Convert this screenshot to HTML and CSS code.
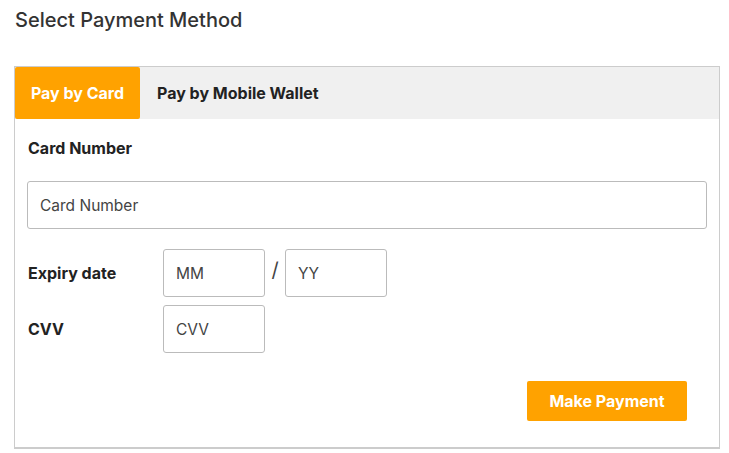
FILE: index.html
```html
<!DOCTYPE html>
<html>
<head>
<meta charset="utf-8">
<link rel="stylesheet" href="styles.css">
</head>
<body>
<h1 class="title">Select Payment Method</h1>
<div class="panel">
  <div class="tabs">
    <div class="tab active">Pay by Card</div>
    <div class="tab">Pay by Mobile Wallet</div>
  </div>
  <div class="content">
    <div class="label top-label">Card Number</div>
    <div class="input wide">Card Number</div>
    <div class="grid">
      <div class="label">Expiry date</div>
      <div class="pair">
        <div class="input small">MM</div>
        <span class="slash">/</span>
        <div class="input small">YY</div>
      </div>
      <div class="label">CVV</div>
      <div class="pair">
        <div class="input small">CVV</div>
      </div>
    </div>
    <div class="actions">
      <div class="btn">Make Payment</div>
    </div>
  </div>
</div>
</body>
</html>
```
FILE: styles.css
```css
* { box-sizing: border-box; }
body {
  margin: 0;
  background: #fff;
  font-family: Inter, Roboto, "Liberation Sans", sans-serif;
  color: #333;
}
.title {
  margin: 0;
  padding: 8px 0 0 15px;
  height: 66px;
  font-size: 20px;
  font-weight: 500;
  color: #333;
  line-height: 24px;
}
.panel {
  margin-left: 14px;
  width: 706px;
  height: 383px;
  border: 1px solid #ccc;
  border-bottom-width: 2px;
}
.tabs {
  display: flex;
  height: 52px;
  background: #f0f0f0;
}
.tab {
  display: flex;
  align-items: center;
  padding: 0 17px;
  font-size: 16px;
  font-weight: 700;
  color: #222;
}
.tab.active {
  width: 125px;
  justify-content: center;
  padding: 0;
  background: #ffa200;
  color: #fff;
  border-radius: 2px;
}
.content {
  padding: 0 12px 0 12px;
}
.label {
  font-size: 16px;
  font-weight: 700;
  color: #222;
}
.top-label {
  height: 58px;
  display: flex;
  align-items: center;
  padding-left: 1px;
  margin-bottom: 4px;
}
.input {
  height: 48px;
  border: 1px solid #bbb;
  border-radius: 3px;
  display: flex;
  align-items: center;
  padding-left: 12px;
  font-size: 15.5px;
  color: #444;
}
.wide { width: 680px; }
.grid {
  margin-top: 20px;
  display: grid;
  grid-template-columns: 136px auto;
  row-gap: 8px;
  align-items: center;
}
.grid .label { padding-left: 1px; }
.pair {
  display: flex;
  align-items: center;
}
.small { width: 102px; }
.slash {
  width: 20px;
  text-align: center;
  font-size: 20px;
  color: #444;
  margin-top: -6px;
}
.actions {
  display: flex;
  justify-content: flex-end;
  padding-right: 20px;
  margin-top: 28px;
}
.btn {
  width: 160px;
  height: 40px;
  background: #ffa200;
  color: #fff;
  border-radius: 2px;
  display: flex;
  align-items: center;
  justify-content: center;
  font-size: 16px;
  font-weight: 700;
}
```
